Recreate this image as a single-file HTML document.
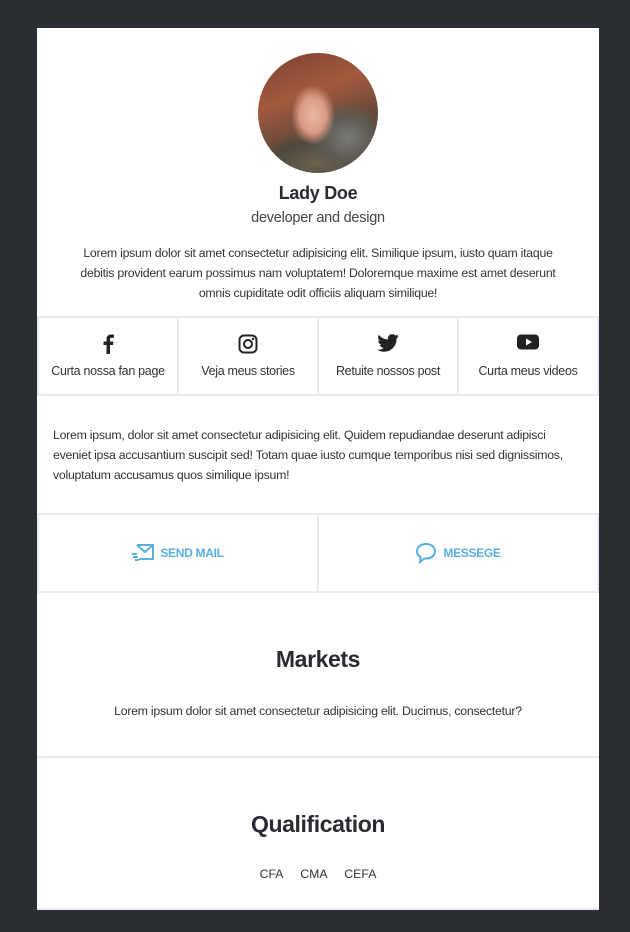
<!DOCTYPE html>
<html><head><style>
*{box-sizing:border-box;margin:0;padding:0}
body{width:630px;height:932px;background:#2b2e33;font-family:"Liberation Sans",sans-serif;color:#333;position:relative;overflow:hidden}
.card{position:absolute;left:37px;top:28px;width:562px;height:882px;background:#fff}
.av{position:absolute;left:221px;top:25px;width:120px;height:120px;border-radius:50%;overflow:hidden;
background:radial-gradient(ellipse 22px 30px at 55px 62px,#e9b8a0 0%,#d89a82 60%,transparent 100%),
radial-gradient(ellipse 40px 35px at 90px 85px,#7a7b78 0%,#5e5a52 60%,transparent 100%),
radial-gradient(ellipse 60px 30px at 60px 110px,#6b6350 0%,#4e4a3e 70%,transparent 100%),
linear-gradient(160deg,#7a4030 0%,#a45a3e 35%,#6b4b3a 60%,#3e3a33 100%)}
.t{position:absolute;left:0;width:562px;text-align:center}
.p{letter-spacing:-0.25px}
.soc{position:absolute;top:288px;left:0;width:562px;height:80px;display:flex;border-top:2px solid #e8ebf0;border-bottom:2px solid #e8ebf0}
.soc div{flex:1;border-left:2px solid #e8ebf0;text-align:center;font-size:12.5px;color:#333;position:relative;letter-spacing:-0.3px}
.soc div:last-child{border-right:2px solid #e8ebf0}
.soc svg{position:absolute;left:50%;top:16px;transform:translateX(-50%)}
.soc span{position:absolute;left:0;right:0;top:46px}
.btns{position:absolute;top:485px;left:0;width:562px;height:80px;display:flex;border-top:2px solid #e8ebf0;border-bottom:2px solid #e8ebf0}
.btns div{flex:1;border-left:2px solid #e8ebf0;display:flex;align-items:center;justify-content:center;color:#5aaee0;font-weight:bold;font-size:12px;gap:6px;letter-spacing:-0.3px}
.btns div:last-child{border-right:2px solid #e8ebf0}
</style></head><body>
<div class="card">
<div class="av"></div>
<div class="t" style="top:155px;font-size:18px;font-weight:bold;color:#2a2a33;letter-spacing:-0.3px">Lady Doe</div>
<div class="t p" style="top:182px;font-size:14.5px;color:#444">developer and design</div>
<div class="t p" style="top:215px;left:30px;width:502px;font-size:12.3px;line-height:20px;color:#333">Lorem ipsum dolor sit amet consectetur adipisicing elit. Similique ipsum, iusto quam itaque debitis provident earum possimus nam voluptatem! Doloremque maxime est amet deserunt omnis cupiditate odit officiis aliquam similique!</div>
<div class="soc">
<div><svg width="12" height="20" viewBox="0 0 12 20"><path d="M8 20V11h3l.5-3.5H8V5.5C8 4.5 8.3 3.8 9.8 3.8H12V.7C11.6.6 10.4.5 9 .5 6.2.5 4.5 2.2 4.5 5.2v2.3H1.5V11h3v9z" fill="#222"/></svg><span>Curta nossa fan page</span></div>
<div><svg width="20" height="20" viewBox="0 0 20 20"><rect x="1.5" y="1.5" width="17" height="17" rx="4.5" fill="none" stroke="#222" stroke-width="2"/><circle cx="10" cy="10" r="4" fill="none" stroke="#222" stroke-width="2"/><circle cx="15" cy="5" r="1.2" fill="#222"/></svg><span>Veja meus stories</span></div>
<div><svg width="22" height="18" viewBox="0 0 24 20"><path d="M24 2.4c-.9.4-1.8.6-2.8.8 1-.6 1.8-1.6 2.2-2.700-1 .6-2 1-3.100 1.2C19.4.7 18.1.1 16.7.1c-2.7 0-4.9 2.2-4.9 4.9 0 .4 0 .8.1 1.1C7.8 5.9 4.2 4 1.7 1 1.3 1.7 1 2.6 1 3.5c0 1.7.9 3.2 2.2 4.1-.8 0-1.600-.2-2.2-.6v.1c0 2.4 1.7 4.4 3.9 4.8-.4.1-.8.2-1.300.2-.3 0-.6 0-.9-.1.6 2 2.4 3.4 4.6 3.4-1.700 1.300-3.800 2.100-6.100 2.100H0c2.200 1.400 4.800 2.200 7.500 2.200 9.100 0 14-7.500 14-14v-.6c1-.7 1.800-1.600 2.500-2.600z" fill="#222"/></svg><span>Retuite nossos post</span></div>
<div><svg width="22" height="16" viewBox="0 0 22 16"><rect x="0" y="0.5" width="22" height="15" rx="4" fill="#222"/><path d="M9 4.5v7l6-3.5z" fill="#fff"/></svg><span>Curta meus videos</span></div>
</div>
<div class="t p" style="top:397px;left:16px;width:532px;text-align:left;font-size:12.3px;line-height:20px;color:#333">Lorem ipsum, dolor sit amet consectetur adipisicing elit. Quidem repudiandae deserunt adipisci eveniet ipsa accusantium suscipit sed! Totam quae iusto cumque temporibus nisi sed dignissimos, voluptatum accusamus quos similique ipsum!</div>
<div class="btns">
<div><svg width="22" height="18" viewBox="0 0 22 18"><path d="M5 1h16v14H7" fill="none" stroke="#5aaee0" stroke-width="2"/><path d="M5 1l8 7 8-7" fill="none" stroke="#5aaee0" stroke-width="2"/><path d="M0 10h5M1 13h5M3 16h4" stroke="#5aaee0" stroke-width="2"/></svg>SEND MAIL</div>
<div><svg width="22" height="22" viewBox="0 0 22 22"><path d="M11 2C5.5 2 2 5.3 2 9.3c0 2.5 1.3 4.5 3.6 5.8L5 20l4.5-3.5c.5.1 1 .1 1.5.1 5.5 0 9-3.3 9-7.3S16.5 2 11 2z" fill="none" stroke="#5aaee0" stroke-width="2"/></svg>MESSEGE</div>
</div>
<div class="t" style="top:618px;font-size:23px;font-weight:bold;color:#2a2a33;letter-spacing:-0.4px">Markets</div>
<div class="t p" style="top:676px;font-size:12.3px;color:#333">Lorem ipsum dolor sit amet consectetur adipisicing elit. Ducimus, consectetur?</div>
<div style="position:absolute;top:728px;left:0;width:562px;height:2px;background:#e8ebf0"></div>
<div class="t" style="top:783px;font-size:23px;font-weight:bold;color:#2a2a33;letter-spacing:-0.4px">Qualification</div>
<div class="t" style="top:839px;font-size:12.3px;color:#333;word-spacing:14px">CFA CMA CEFA</div>
<div style="position:absolute;top:880px;left:0;width:562px;height:2px;background:#e8ebf0"></div>
</div>
</body></html>
